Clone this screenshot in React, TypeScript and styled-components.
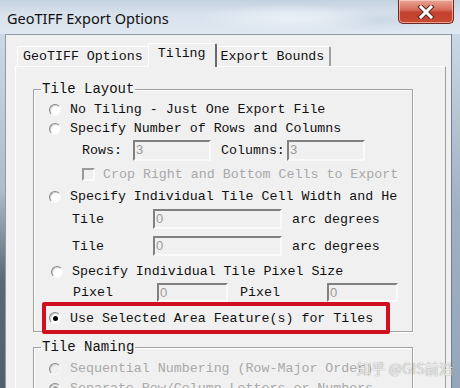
import styled, { createGlobalStyle } from "styled-components";

const Global = createGlobalStyle`
  html, body {
    margin: 0;
    padding: 0;
    background: #c9d5e2;
  }
`;

const Window = styled.div`
  position: relative;
  width: 460px;
  height: 388px;
  overflow: hidden;
  display: flex;
  flex-direction: column;
  background: linear-gradient(90deg, #cbd7e4 0%, #dbe4ee 45%, #d3deea 100%);
`;

const TitleBar = styled.div`
  height: 34px;
  flex: none;
  display: flex;
  align-items: flex-start;
  justify-content: space-between;
  background:
    radial-gradient(ellipse 90px 14px at 290px 18px, rgba(235, 241, 248, 0.9), transparent),
    radial-gradient(ellipse 60px 12px at 380px 20px, rgba(200, 214, 228, 0.8), transparent),
    linear-gradient(180deg, #c3d1df 0%, #d8e2ec 40%, #dfe7f0 100%);
`;

const Title = styled.div`
  font-family: "Noto Sans", "Open Sans", sans-serif;
  font-size: 14.5px;
  color: #111;
  padding: 7px 0 0 7px;
  line-height: 22px;
`;

const CloseButton = styled.div`
  width: 56px;
  height: 24px;
  margin-right: 6px;
  box-sizing: border-box;
  border: 1px solid #6e2a22;
  border-top: none;
  border-radius: 0 0 5px 5px;
  background: linear-gradient(180deg, #e9a596 0%, #d8705f 40%, #c2402d 55%, #c94a32 100%);
  box-shadow: inset 0 0 0 1px rgba(255, 220, 210, 0.6);
  display: flex;
  align-items: center;
  justify-content: center;
`;

const Frame = styled.div`
  flex: 1;
  display: flex;
`;

const SideLeft = styled.div`
  width: 5px;
  flex: none;
  background: linear-gradient(180deg, #ccd8e4 0%, #aebccb 35%, #5e6872 55%, #4e5862 100%);
`;

const SideRight = styled.div`
  width: 8px;
  flex: none;
  background: linear-gradient(180deg, #cbd7e3 0%, #9fb0c2 40%, #8ea1b5 100%);
  border-left: 1px solid #6f7f90;
`;

const Client = styled.div`
  flex: 1;
  background: #f0f0f0;
  border-top: 1px solid #8d9bab;
  border-left: 1px solid #8d9bab;
  padding: 8px 5px 0 9px;
  font-family: "Liberation Mono", "DejaVu Sans Mono", monospace;
  font-size: 13.3px;
  color: #111;
`;

const TabStrip = styled.div`
  display: flex;
  align-items: flex-end;
  height: 23px;
  padding-left: 2px;
`;

const Tab = styled.div<{ $active?: boolean }>`
  box-sizing: border-box;
  height: ${(p) => (p.$active ? "24px" : "20px")};
  margin: ${(p) => (p.$active ? "0 -2px -1px" : "0")};
  padding: ${(p) => (p.$active ? "0 9px" : "0 5px")};
  line-height: 20px;
  background: #f0f0f0;
  border-top: 1px solid #fff;
  border-left: 1px solid #fff;
  border-right: 2px solid ${(p) => (p.$active ? "#6a6a6a" : "#a0a0a0")};
  border-radius: 2px 2px 0 0;
  position: relative;
  z-index: ${(p) => (p.$active ? 1 : 0)};
  white-space: nowrap;
`;

const TabPage = styled.div`
  height: 400px;
  border-top: 1px solid #fff;
  border-left: 1px solid #fff;
  border-right: 1px solid #a0a0a0;
  padding: 14px 0 0 17px;
`;

const Group = styled.fieldset`
  width: 380px;
  margin: 0;
  padding: 0;
  box-sizing: border-box;
  border: 1px solid #a0a0a0;
  box-shadow: inset 1px 1px 0 #fff, 1px 1px 0 #fff;
  & + & {
    margin-top: 7px;
  }
`;

const Legend = styled.legend`
  margin-left: 7px;
  padding: 0 1px;
  line-height: 16px;
  font-size: 14px;
`;

const Row = styled.div<{ $top?: number; $indent?: number; $h?: number }>`
  display: flex;
  align-items: center;
  height: ${(p) => p.$h ?? 19}px;
  margin-top: ${(p) => p.$top ?? 0}px;
  padding-left: ${(p) => p.$indent ?? 15}px;
  white-space: nowrap;
`;

const RadioCircle = styled.span<{ $checked?: boolean; $disabled?: boolean }>`
  width: 12px;
  height: 12px;
  flex: none;
  box-sizing: border-box;
  border-radius: 50%;
  border: 1px solid;
  border-color: #8a8a8a #f8f8f8 #f8f8f8 #8a8a8a;
  background: ${(p) => (p.$disabled ? "#f0f0f0" : "#fff")};
  box-shadow: inset 1px 1px 0 #cfcfcf;
  display: flex;
  align-items: center;
  justify-content: center;
  margin-right: 9px;
  &::after {
    content: "";
    display: ${(p) => (p.$checked ? "block" : "none")};
    width: 5px;
    height: 5px;
    border-radius: 50%;
    background: ${(p) => (p.$disabled ? "#a8a8a8" : "#000")};
  }
`;

const CheckBox = styled.span`
  width: 13px;
  height: 13px;
  flex: none;
  box-sizing: border-box;
  border: 2px solid;
  border-color: #9a9a9a #fafafa #fafafa #9a9a9a;
  background: #f0f0f0;
  margin-right: 8px;
`;

const Text = styled.span<{ $muted?: boolean; $w?: number; $gap?: number }>`
  color: ${(p) => (p.$muted ? "#a9a9a9" : "#111")};
  width: ${(p) => (p.$w ? `${p.$w}px` : "auto")};
  margin-left: ${(p) => p.$gap ?? 0}px;
  flex: none;
`;

const Field = styled.div<{ $w: number; $h?: number }>`
  width: ${(p) => p.$w}px;
  height: ${(p) => p.$h ?? 20}px;
  flex: none;
  box-sizing: border-box;
  border: 2px solid;
  border-color: #808080 #fafafa #fafafa #808080;
  background: #f0f0f0;
  color: #9a9a9a;
  font-family: "Liberation Sans", sans-serif;
  font-size: 13px;
  line-height: 16px;
  padding-left: 1px;
`;

const Highlight = styled.div`
  width: 348px;
  height: 32px;
  box-sizing: border-box;
  margin: 0 0 -3px 8px;
  border: 4px solid #cf1020;
  border-radius: 2px;
  display: flex;
  align-items: center;
  padding-left: 3px;
  position: relative;
  z-index: 1;
  white-space: nowrap;
`;

const Watermark = styled.div`
  position: absolute;
  left: 357px;
  top: 358px;
  font-family: "Noto Sans CJK SC", "Noto Sans", sans-serif;
  font-size: 14px;
  letter-spacing: 0.2px;
  color: rgba(255, 255, 255, 0.85);
  text-shadow: 0 0 1px rgba(60, 60, 60, 0.75);
  white-space: nowrap;
`;

function CloseGlyph() {
  return (
    <svg width="18" height="14" viewBox="0 0 18 14">
      <path d="M4 2 L14 12 M14 2 L4 12" stroke="#5a2a24" strokeWidth="5" strokeLinecap="square" />
      <path d="M4 2 L14 12 M14 2 L4 12" stroke="#fff" strokeWidth="3" strokeLinecap="square" />
    </svg>
  );
}

export default function App() {
  return (
    <>
      <Global />
      <Window>
        <TitleBar>
          <Title>GeoTIFF Export Options</Title>
          <CloseButton>
            <CloseGlyph />
          </CloseButton>
        </TitleBar>
        <Frame>
          <SideLeft />
          <Client>
            <TabStrip>
              <Tab>GeoTIFF Options</Tab>
              <Tab $active>Tiling</Tab>
              <Tab>Export Bounds</Tab>
            </TabStrip>
            <TabPage>
              <Group>
                <Legend>Tile Layout</Legend>
                <Row $top={3}>
                  <RadioCircle />
                  <Text>No Tiling - Just One Export File</Text>
                </Row>
                <Row>
                  <RadioCircle />
                  <Text>Specify Number of Rows and Columns</Text>
                </Row>
                <Row $top={2} $h={21} $indent={48}>
                  <Text $w={51}>Rows:</Text>
                  <Field $w={78} $h={21}>3</Field>
                  <Text $w={66} $gap={10}>Columns:</Text>
                  <Field $w={78} $h={21}>3</Field>
                </Row>
                <Row $top={3} $h={20} $indent={48}>
                  <CheckBox />
                  <Text $muted>Crop Right and Bottom Cells to Export</Text>
                </Row>
                <Row $top={3}>
                  <RadioCircle />
                  <Text>Specify Individual Tile Cell Width and He</Text>
                </Row>
                <Row $top={3} $h={20} $indent={38}>
                  <Text $w={81}>Tile</Text>
                  <Field $w={129}>0</Field>
                  <Text $gap={10}>arc degrees</Text>
                </Row>
                <Row $top={7} $h={20} $indent={38}>
                  <Text $w={81}>Tile</Text>
                  <Field $w={129}>0</Field>
                  <Text $gap={10}>arc degrees</Text>
                </Row>
                <Row $top={6} $indent={17}>
                  <RadioCircle />
                  <Text>Specify Individual Tile Pixel Size</Text>
                </Row>
                <Row $top={2} $h={19} $indent={39}>
                  <Text $w={84}>Pixel</Text>
                  <Field $w={71} $h={19}>0</Field>
                  <Text $w={87} $gap={12}>Pixel</Text>
                  <Field $w={71} $h={19}>0</Field>
                </Row>
                <Highlight>
                  <RadioCircle $checked />
                  <Text>Use Selected Area Feature(s) for Tiles</Text>
                </Highlight>
              </Group>
              <Group>
                <Legend>Tile Naming</Legend>
                <Row $top={4}>
                  <RadioCircle $disabled />
                  <Text $muted>Sequential Numbering (Row-Major Order)</Text>
                </Row>
                <Row $top={1}>
                  <RadioCircle $disabled $checked />
                  <Text $muted>Separate Row/Column Letters or Numbers</Text>
                </Row>
              </Group>
            </TabPage>
          </Client>
          <SideRight />
        </Frame>
        <Watermark>知乎 @GIS前沿</Watermark>
      </Window>
    </>
  );
}
